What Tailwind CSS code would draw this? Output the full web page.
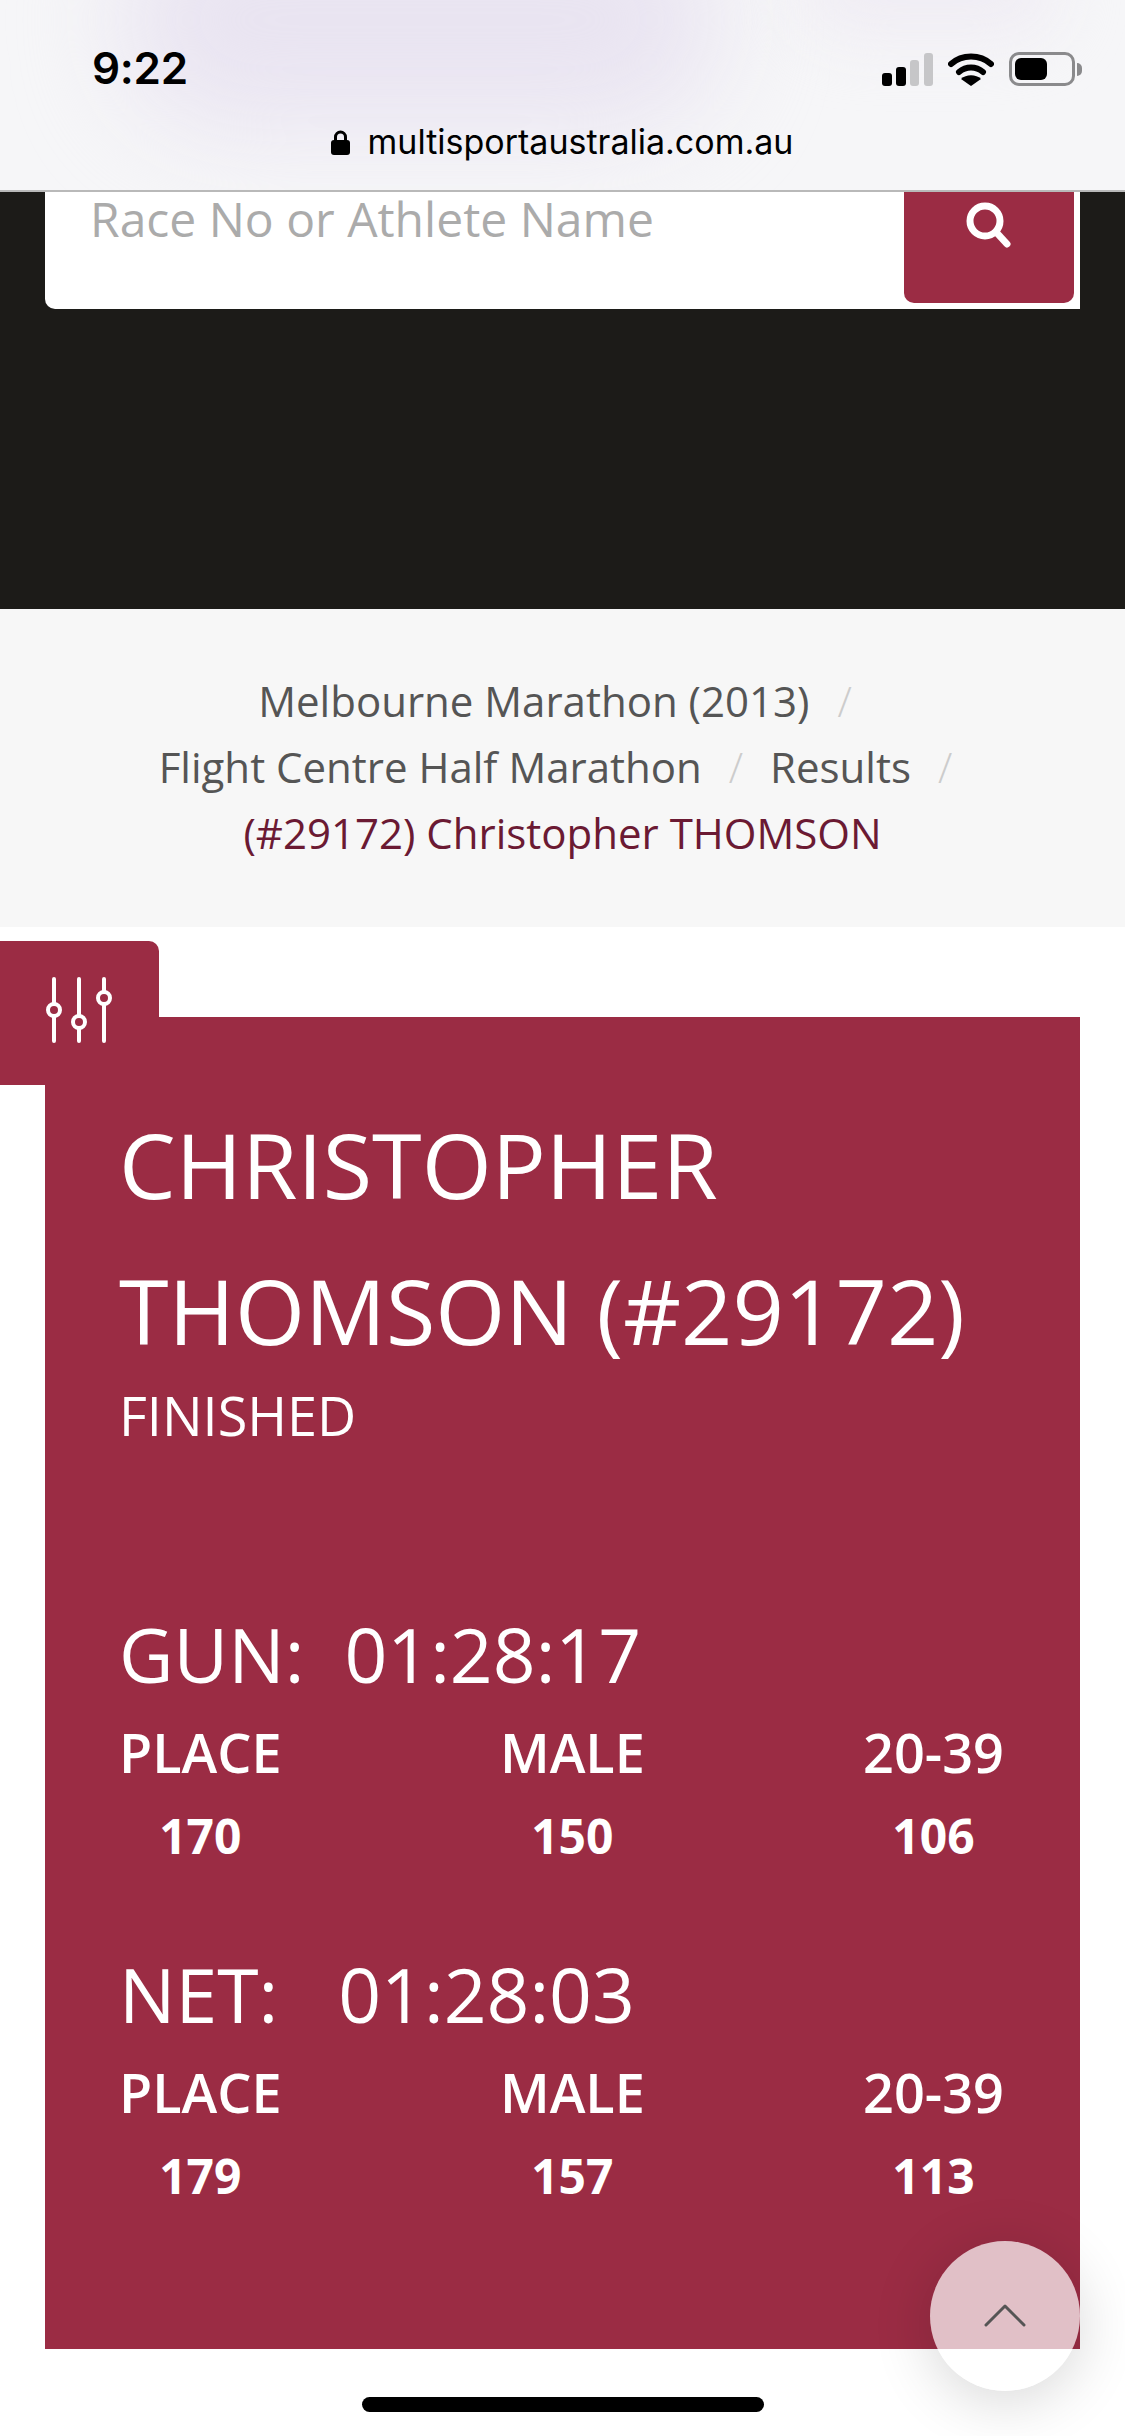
<!DOCTYPE html>
<html>
<head>
<meta charset="utf-8">
<script src="https://cdn.jsdelivr.net/npm/@tailwindcss/browser@4"></script>
</head>
<body class="bg-white font-['Open_Sans',sans-serif]">
<div class="relative w-[1125px] h-[2436px] overflow-hidden bg-white">
  <!-- browser bar -->
  <header class="relative h-[192px] border-b-2 border-[#b9b9b9] bg-[#f6f6f8] overflow-hidden">
    <div class="absolute left-[120px] top-[-90px] w-[600px] h-[220px] rounded-full bg-[#e9e4f1] blur-[50px]"></div>
    <div class="absolute left-[800px] top-[-60px] w-[260px] h-[100px] rounded-full bg-[#f0edf4] blur-[30px]"></div>
    <div class="relative flex items-end justify-between h-[87px] pl-[92px] pr-[43px]">
      <span class="font-['Inter',sans-serif] font-semibold text-[44px] leading-[44px] text-black tracking-[-0.3px] mb-[-3px]">9:22</span>
      <div class="flex items-end gap-[15px] mb-[1px]">
        <svg width="51" height="33" viewBox="0 0 51 33"><rect x="0" y="20" width="10" height="13" rx="3" fill="#000"/><rect x="14" y="14" width="10" height="19" rx="3" fill="#000"/><rect x="28" y="7" width="9" height="26" rx="3" fill="#c6c6c8"/><rect x="42" y="0" width="9" height="33" rx="3" fill="#c6c6c8"/></svg>
        <svg width="46" height="33" viewBox="0 0 46 33"><path d="M3 11 C14 1 32 1 43 11" fill="none" stroke="#000" stroke-width="6" stroke-linecap="round" stroke-linejoin="round"/><path d="M11 19 C18 13 28 13 35 19" fill="none" stroke="#000" stroke-width="6" stroke-linecap="round"/><path d="M23 33 L13 26 C18 21 28 21 33 26 Z" fill="#000"/></svg>
        <div class="flex items-center">
          <div class="w-[66px] h-[34px] rounded-[10px] border-[3px] border-[#8a8a8c] p-[3px]"><div class="w-[32px] h-full rounded-[6px] bg-black"></div></div>
          <div class="w-[5px] h-[13px] ml-[2px] rounded-r-full bg-[#8a8a8c]"></div>
        </div>
      </div>
    </div>
    <div class="relative flex items-center justify-center gap-[18px] mt-[33px] pr-[1px]">
      <svg width="19" height="26" viewBox="0 0 19 26"><path d="M4.5 12 V8 a5 5 0 0 1 10 0 V12" fill="none" stroke="#000" stroke-width="3"/><rect x="0" y="11" width="19" height="15" rx="3" fill="#000"/></svg>
      <span class="font-['Inter',sans-serif] text-[34px] leading-[44px] text-black">multisportaustralia.com.au</span>
    </div>
  </header>

  <!-- dark search section -->
  <section class="h-[417px] bg-[#1c1b18] pl-[45px] pr-[45px]">
    <div class="flex justify-between h-[117px] bg-white rounded-bl-[10px] pr-[6px]">
      <span class="pl-[45px] text-[48px] leading-[54px] text-[#ababab]">Race No or Athlete Name</span>
      <div class="w-[170px] h-[111px] flex justify-center pt-[10px] bg-[#9b2c44] rounded-b-[10px]">
        <svg width="46" height="46" viewBox="0 0 46 46"><circle cx="19" cy="19" r="15" fill="none" stroke="#fff" stroke-width="7"/><path d="M30 30 L41 42" stroke="#fff" stroke-width="7" stroke-linecap="round"/></svg>
      </div>
    </div>
  </section>

  <!-- breadcrumb -->
  <nav class="h-[318px] bg-[#f7f7f7] pt-[59px] text-center text-[42px] leading-[66px] text-[#555]">
    <div class="pr-[15px]">Melbourne Marathon (2013)<span class="ml-[28px] text-[#ccc] font-light">/</span></div>
    <div class="pr-[14px]">Flight Centre Half Marathon<span class="mx-[27px] text-[#ccc] font-light">/</span>Results<span class="ml-[27px] text-[#ccc] font-light">/</span></div>
    <div class="text-[#6b1a33]">(#29172) Christopher THOMSON</div>
  </nav>

  <!-- card -->
  <main class="relative ml-[45px] mr-[45px] mt-[90px] h-[1332px] bg-[#9b2c44] pl-[74px] pr-[76px] pt-[74px] text-white">
    <div class="absolute left-[-45px] top-[-76px] w-[159px] h-[144px] flex items-center justify-center bg-[#9b2c44] rounded-tr-[10px]">
      <svg width="68" height="68" viewBox="0 0 68 68" class="ml-[-4px] mt-[-6px]" fill="none" stroke="#fff" stroke-width="4" stroke-linecap="round">
        <path d="M10 3 V28 M10 40 V65 M35 3 V40 M35 52 V65 M60 3 V16 M60 28 V65"/>
        <circle cx="10" cy="34" r="6"/><circle cx="35" cy="46" r="6"/><circle cx="60" cy="22" r="6"/>
      </svg>
    </div>
    <h1 class="text-[90px] leading-[146px] font-normal">CHRISTOPHER<br>THOMSON (#29172)</h1>
    <div class="text-[54px] leading-[64px]">FINISHED</div>

    <section class="mt-[165px]">
      <div class="text-[75px] leading-[84px]">GUN:<span class="ml-[40px]">01:28:17</span></div>
      <div class="flex justify-between mt-[14px] text-[54px] font-semibold leading-[84px] text-center">
        <div>PLACE<div class="text-[48px] font-bold">170</div></div>
        <div>MALE<div class="text-[48px] font-bold">150</div></div>
        <div>20-39<div class="text-[48px] font-bold">106</div></div>
      </div>
    </section>
    <section class="mt-[74px]">
      <div class="text-[75px] leading-[84px]">NET:<span class="ml-[60px]">01:28:03</span></div>
      <div class="flex justify-between mt-[14px] text-[54px] font-semibold leading-[84px] text-center">
        <div>PLACE<div class="text-[48px] font-bold">179</div></div>
        <div>MALE<div class="text-[48px] font-bold">157</div></div>
        <div>20-39<div class="text-[48px] font-bold">113</div></div>
      </div>
    </section>
  </main>

  <!-- back to top -->
  <button class="absolute left-[930px] top-[2241px] w-[150px] h-[150px] flex items-center justify-center rounded-full bg-white/70 shadow-[0_10px_60px_rgba(0,0,0,0.16)]">
    <svg width="42" height="24" viewBox="0 0 42 24" class="mt-[-2px]" fill="none" stroke="#555" stroke-width="3" stroke-linecap="round" stroke-linejoin="round"><path d="M2 22 L21 3 L40 22"/></svg>
  </button>

  <!-- home indicator -->
  <div class="absolute left-[362px] top-[2397px] w-[402px] h-[15px] rounded-full bg-black"></div>
</div>
</body>
</html>
